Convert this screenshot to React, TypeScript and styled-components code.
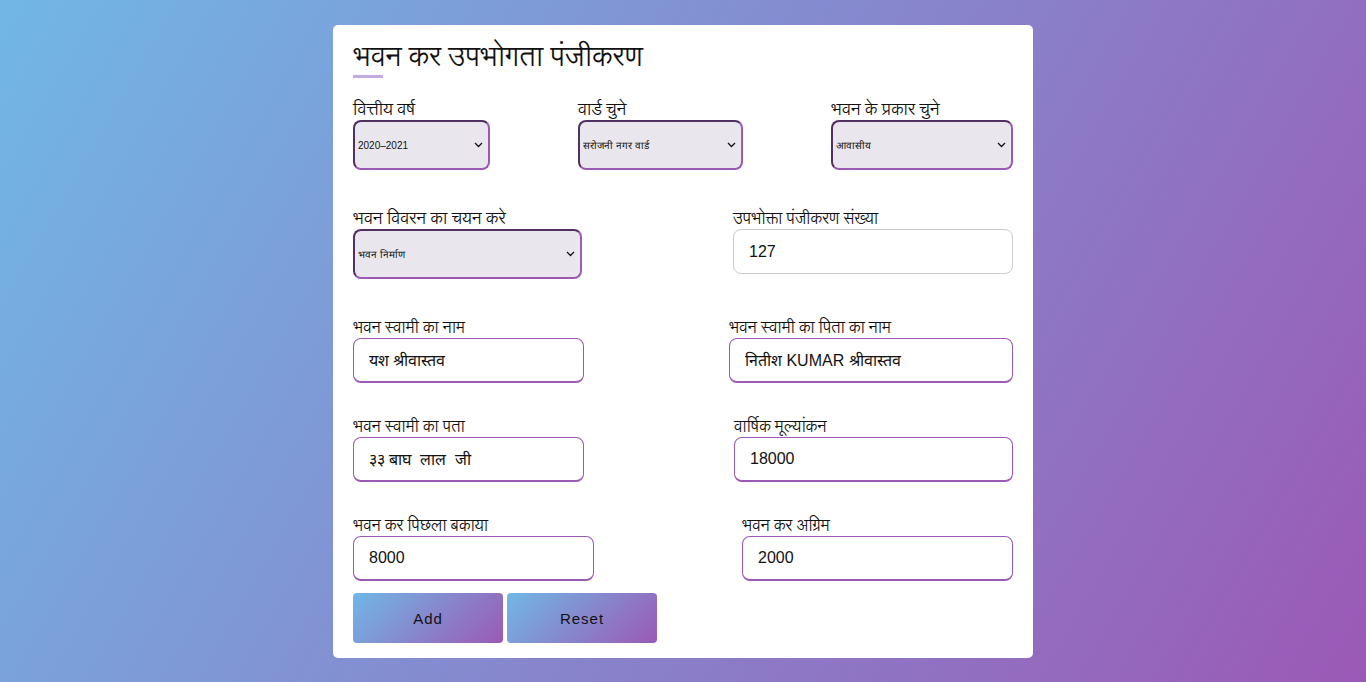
import React from "react";
import styled, { createGlobalStyle } from "styled-components";

const Global = createGlobalStyle`
  * { box-sizing: border-box; }
  html, body { margin: 0; padding: 0; }
  body {
    min-height: 100vh;
    font-family: "Liberation Sans", Arial, sans-serif;
    background: linear-gradient(120deg, #71b7e6, #9b59b6);
  }
`;

const HINDI_THIN = `"Liberation Serif", "Lohit Devanagari", serif`;

const Page = styled.div`
  min-height: 100vh;
  display: flex;
  justify-content: center;
  align-items: flex-start;
  padding-top: 25px;
`;

const Card = styled.div`
  width: 700px;
  background: #fff;
  border-radius: 5px;
  padding: 14px 20px 15px 20px;
`;

const Title = styled.div`
  position: relative;
  font-family: ${HINDI_THIN};
  font-size: 28px;
  line-height: 36px;
  color: #111;
  padding-bottom: 3px;
  margin-bottom: 22px;
  &::before {
    content: "";
    position: absolute;
    left: 0;
    bottom: 0;
    width: 30px;
    height: 3px;
    background: #c0aadf;
  }
`;

const Row = styled.div`
  display: flex;
  justify-content: space-between;
  align-items: flex-start;
  margin-bottom: 34px;
`;

const Field = styled.div<{ $w: number }>`
  width: ${(p) => p.$w}px;
  display: flex;
  flex-direction: column;
`;

const Label = styled.label<{ $size?: number }>`
  font-family: ${HINDI_THIN};
  font-size: ${(p) => p.$size ?? 16}px;
  line-height: 20px;
  height: 20px;
  color: #111;
  white-space: nowrap;
`;

const SelectWrap = styled.div`
  position: relative;
  width: 100%;
  height: 50px;
  margin-bottom: 5px;
`;

const Select = styled.select`
  appearance: none;
  -webkit-appearance: none;
  height: 50px;
  width: 100%;
  border: 2px inset #9b59b6;
  border-radius: 8px;
  background: #e9e7ed;
  font-size: 10px;
  font-family: "Liberation Sans", Arial, sans-serif;
  font-weight: 400;
  color: #111;
  padding: 0 20px 0 3px;
  outline: none;
`;

const Chevron = styled.svg`
  position: absolute;
  right: 7px;
  top: 50%;
  margin-top: -3px;
  width: 9px;
  height: 6px;
  pointer-events: none;
`;

const Input = styled.input<{ $plain?: boolean }>`
  height: 45px;
  width: 100%;
  border: 1px solid ${(p) => (p.$plain ? "#cccccc" : "#9b59b6")};
  border-bottom-width: ${(p) => (p.$plain ? 1 : 2)}px;
  border-radius: 8px;
  padding: 0 15px;
  font-size: 16px;
  font-family: "Liberation Sans", Arial, sans-serif;
  color: #111;
  background: #fff;
  outline: none;
`;

const Buttons = styled.div`
  display: flex;
  gap: 4px;
  margin-top: -22px;
`;

const Button = styled.button`
  width: 150px;
  height: 50px;
  border: none;
  border-radius: 4px;
  background: linear-gradient(135deg, #71b7e6, #9b59b6);
  font-family: "Liberation Sans", Arial, sans-serif;
  font-size: 15px;
  letter-spacing: 1px;
  color: #111;
  cursor: pointer;
`;

function Dropdown({ value, label }: { value: string; label: string }) {
  return (
    <SelectWrap>
      <Select defaultValue={value}>
        <option value={value}>{label}</option>
      </Select>
      <Chevron viewBox="0 0 9 6">
        <path d="M1 1 L4.5 4.5 L8 1" fill="none" stroke="#111" strokeWidth="1.3" />
      </Chevron>
    </SelectWrap>
  );
}

export default function App() {
  return (
    <>
      <Global />
      <Page>
        <Card>
          <Title>भवन कर उपभोगता पंजीकरण</Title>
          <Row>
            <Field $w={137}>
              <Label $size={17}>वित्तीय वर्ष</Label>
              <Dropdown value="y" label="2020–2021" />
            </Field>
            <Field $w={165}>
              <Label $size={17}>वार्ड चुने</Label>
              <Dropdown value="s" label="सरोजनी नगर वार्ड" />
            </Field>
            <Field $w={182}>
              <Label $size={17}>भवन के प्रकार चुने</Label>
              <Dropdown value="a" label="आवासीय" />
            </Field>
          </Row>
          <Row>
            <Field $w={229}>
              <Label $size={17}>भवन विवरन का चयन करे</Label>
              <Dropdown value="b" label="भवन निर्माण" />
            </Field>
            <Field $w={280}>
              <Label>उपभोक्ता पंजीकरण संख्या</Label>
              <Input $plain defaultValue="127" />
            </Field>
          </Row>
          <Row>
            <Field $w={231}>
              <Label>भवन स्वामी का नाम</Label>
              <Input defaultValue="यश श्रीवास्तव" />
            </Field>
            <Field $w={284}>
              <Label>भवन स्वामी का पिता का नाम</Label>
              <Input defaultValue="नितीश KUMAR श्रीवास्तव" />
            </Field>
          </Row>
          <Row>
            <Field $w={231}>
              <Label>भवन स्वामी का पता</Label>
              <Input defaultValue="३३ बाघ  लाल  जी" />
            </Field>
            <Field $w={279}>
              <Label>वार्षिक मूल्यांकन</Label>
              <Input defaultValue="18000" />
            </Field>
          </Row>
          <Row>
            <Field $w={241}>
              <Label>भवन कर पिछला बकाया</Label>
              <Input defaultValue="8000" />
            </Field>
            <Field $w={271}>
              <Label>भवन कर अग्रिम</Label>
              <Input defaultValue="2000" />
            </Field>
          </Row>
          <Buttons>
            <Button type="button">Add</Button>
            <Button type="button">Reset</Button>
          </Buttons>
        </Card>
      </Page>
    </>
  );
}
